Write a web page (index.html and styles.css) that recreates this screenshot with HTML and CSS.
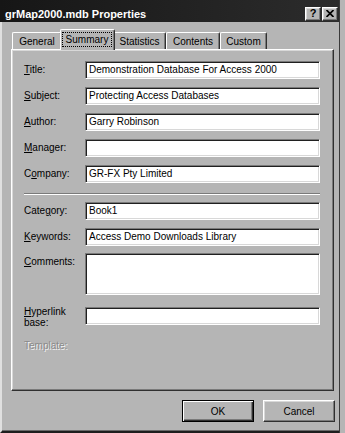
FILE: index.html
```html
<!DOCTYPE html>
<html>
<head>
<meta charset="utf-8">
<title>grMap2000.mdb Properties</title>
<link rel="stylesheet" href="styles.css">
</head>
<body>
<div class="window">
  <div class="titlebar">
    <span class="title">grMap2000.mdb Properties</span>
    <div class="caption-btns">
      <span class="cbtn help">?</span>
      <span class="cbtn close"><svg width="8" height="7" viewBox="0 0 8 7"><path d="M0.5 0 L7.5 7 M7.5 0 L0.5 7" stroke="#000" stroke-width="1.7" fill="none"/></svg></span>
    </div>
  </div>
  <div class="client">
    <div class="tabs">
      <div class="tab t-general">General</div>
      <div class="tab t-summary active"><span class="focus">Summary</span></div>
      <div class="tab t-statistics">Statistics</div>
      <div class="tab t-contents">Contents</div>
      <div class="tab t-custom">Custom</div>
    </div>
    <div class="panel">
      <div class="row"><span class="lbl"><u>T</u>itle:</span><div class="edit">Demonstration Database For Access 2000</div></div>
      <div class="row"><span class="lbl"><u>S</u>ubject:</span><div class="edit">Protecting Access Databases</div></div>
      <div class="row"><span class="lbl"><u>A</u>uthor:</span><div class="edit">Garry Robinson</div></div>
      <div class="row"><span class="lbl"><u>M</u>anager:</span><div class="edit"></div></div>
      <div class="row"><span class="lbl">C<u>o</u>mpany:</span><div class="edit">GR-FX Pty Limited</div></div>
      <div class="sep"></div>
      <div class="row first"><span class="lbl">Cate<u>g</u>ory:</span><div class="edit">Book1</div></div>
      <div class="row"><span class="lbl"><u>K</u>eywords:</span><div class="edit">Access Demo Downloads Library</div></div>
      <div class="row top comments"><span class="lbl"><u>C</u>omments:</span><div class="edit memo"></div></div>
      <div class="row top hyper"><span class="lbl two"><u>H</u>yperlink<br>base:</span><div class="edit"></div></div>
      <div class="disabled">Template:</div>
    </div>
    <div class="buttons">
      <div class="btn default">OK</div>
      <div class="btn">Cancel</div>
    </div>
  </div>
</div>
</body>
</html>
```

FILE: styles.css
```css
* { box-sizing: border-box; margin: 0; padding: 0; }
html, body { width: 345px; height: 433px; overflow: hidden; }
body {
  background: #b5b5b5;
  font-family: "Liberation Sans", Arial, sans-serif;
  font-size: 10px;
  color: #000;
}
.window {
  width: 340px;
  height: 433px;
  display: flex;
  flex-direction: column;
  border-right: 1px solid #3a3a3a;
  background: #b5b5b5;
}
.titlebar {
  height: 22px;
  flex: none;
  display: flex;
  align-items: center;
  padding: 5px 1px 0 5px;
  background: linear-gradient(to right, #161616, #2c2c2c);
}
.title {
  color: #fff;
  font-weight: bold;
  font-size: 11px;
  flex: 1;
}
.caption-btns { display: flex; gap: 1px; }
.cbtn {
  width: 16px;
  height: 14px;
  display: flex;
  align-items: center;
  justify-content: center;
  background: #b5b5b5;
  border: 1px solid;
  border-color: #fff #303030 #303030 #fff;
  box-shadow: inset -1px -1px #7a7a7a, inset 1px 1px #d8d8d8;
  font-weight: bold;
  font-size: 11px;
  line-height: 1;
}
.client {
  flex: 1;
  display: flex;
  flex-direction: column;
  border-left: 2px solid #e0e0e0;
  border-bottom: 2px solid #1e1e1e;
  box-shadow: inset 0 -1px #6a6a6a;
}
.tabs {
  display: flex;
  align-items: flex-end;
  height: 20px;
  margin: 7px 0 0 10px;
  position: relative;
  z-index: 2;
}
.tab {
  flex: none;
  height: 17px;
  display: flex;
  align-items: center;
  justify-content: center;
  padding-top: 1px;
  border-top: 1px solid #fff;
  border-left: 1px solid #fff;
  border-right: 1px solid #303030;
  box-shadow: inset -1px 0 #7a7a7a;
  border-radius: 2px 2px 0 0;
  background: #b5b5b5;
}
.t-general { width: 50px; }
.t-summary { width: 51px; }
.t-statistics { width: 53px; }
.t-contents { width: 54px; }
.t-custom { width: 47px; }
.tab.active {
  width: 55px;
  height: 21px;
  margin: 0 -2px -1px;
  align-items: flex-start;
  justify-content: flex-start;
  padding: 2px 0 0 1px;
  position: relative;
  z-index: 3;
}
.focus {
  width: 50px;
  height: 15px;
  border: 1px dotted #000;
  display: flex;
  align-items: center;
  justify-content: center;
}
.panel {
  width: 323px;
  height: 342px;
  margin-left: 9px;
  padding: 11px 13px 0 12px;
  border: 1px solid;
  border-color: #fff #303030 #303030 #fff;
  box-shadow: inset -1px -1px #7a7a7a, inset 1px 1px #d8d8d8;
  display: flex;
  flex-direction: column;
}
.row {
  display: flex;
  align-items: center;
  margin-top: 8px;
}
.row:first-child, .row.first { margin-top: 0; }
.row.top { align-items: flex-start; }
.comments { margin-top: 7px; }
.hyper { margin-top: 12px; }
.lbl {
  width: 61px;
  flex: none;
  line-height: 12px;
}
.comments .lbl { padding-top: 3px; }
.lbl.two { line-height: 11px; margin-top: -1px; }
.edit {
  width: 235px;
  height: 18px;
  background: #fff;
  border: 1px solid;
  border-color: #7a7a7a #fff #fff #7a7a7a;
  box-shadow: inset 1px 1px #202020, inset -1px -1px #d8d8d8;
  padding: 0 0 0 3px;
  line-height: 16px;
  white-space: nowrap;
  overflow: hidden;
}
.edit.memo { height: 42px; }
.sep {
  width: 296px;
  height: 2px;
  margin: 10px 0 7px;
  border-top: 1px solid #7a7a7a;
  border-bottom: 1px solid #fff;
}
.disabled {
  margin-top: 12px;
  line-height: 12px;
  color: #8a8a8a;
  text-shadow: 1px 1px 0 #f2f2f2;
}
.buttons {
  display: flex;
  justify-content: flex-end;
  gap: 9px;
  margin-top: 9px;
  padding-right: 4px;
}
.btn {
  width: 72px;
  height: 22px;
  display: flex;
  align-items: center;
  justify-content: center;
  border: 1px solid;
  border-color: #fff #303030 #303030 #fff;
  box-shadow: inset -1px -1px #7a7a7a, inset 1px 1px #d8d8d8;
}
.btn.default {
  border: 1px solid #000;
  box-shadow: inset 1px 1px #fff, inset -1px -1px #303030, inset -2px -2px #7a7a7a;
}
```
